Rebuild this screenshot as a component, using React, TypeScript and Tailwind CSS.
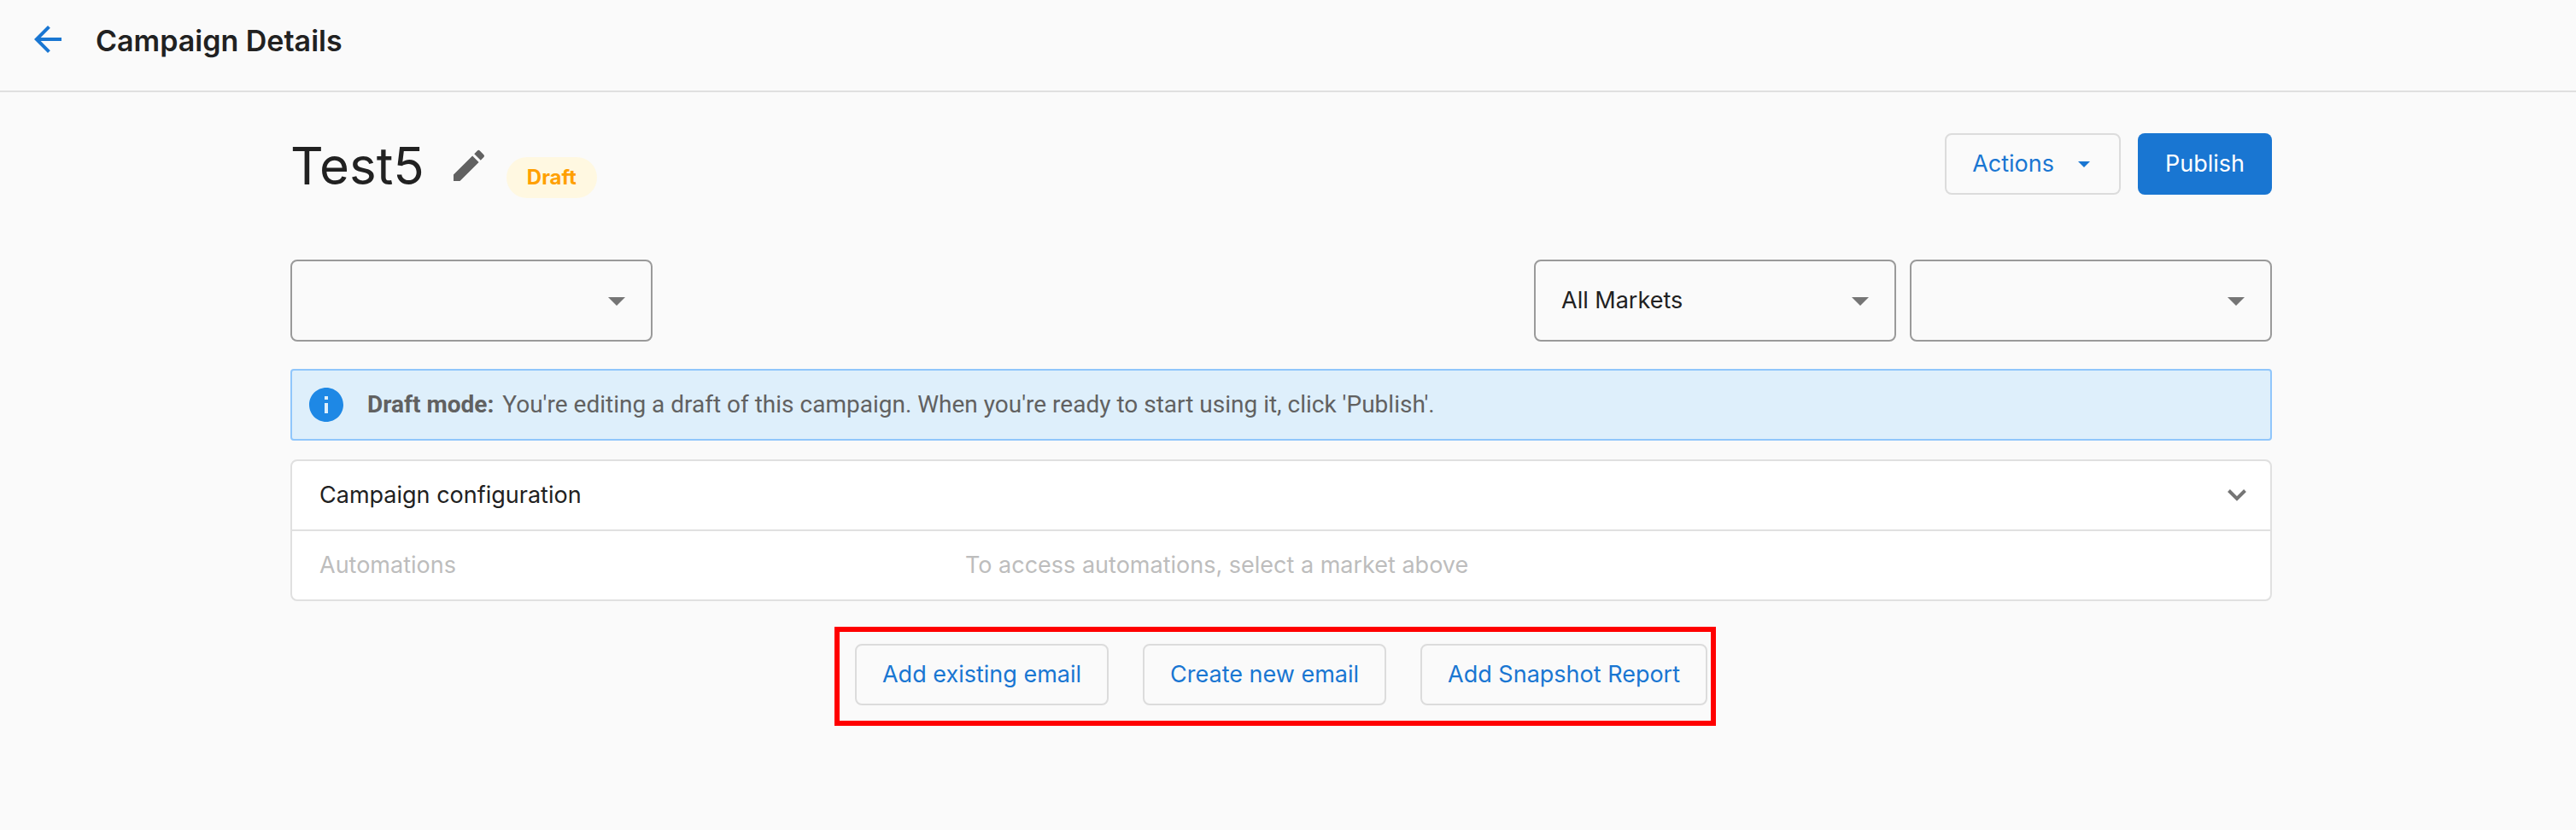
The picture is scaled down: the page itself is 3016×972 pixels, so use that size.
import React, { useState } from 'react';
import { MdArrowBack, MdEdit, MdInfo } from 'react-icons/md';

interface SelectFieldProps {
  label: string;
  options: string[];
}

function SelectField({ label, options }: SelectFieldProps) {
  const [value, setValue] = useState(options[0]);

  return (
    <div className="relative w-[424px]">
      <select
        aria-label={label}
        value={value}
        onChange={(e) => setValue(e.target.value)}
        className="block h-24 w-full appearance-none rounded-lg border-2 border-[#9a9a9a] bg-transparent pl-[30px] pr-16 text-[27px] text-[#212121]"
      >
        {options.map((option) => (
          <option key={option} value={option}>
            {option}
          </option>
        ))}
      </select>
      <svg viewBox="0 0 20 10" className="pointer-events-none absolute top-11 right-8 h-[10px] w-5 fill-[#757575]">
        <path d="M0 0h20L10 10z" />
      </svg>
    </div>
  );
}

const emailActions = ['Add existing email', 'Create new email', 'Add Snapshot Report'];

const outlineButton =
  'flex h-[72px] items-center rounded-lg border-2 border-[#dcdcdc] px-[30px] text-[27px] text-[#1976d2] hover:bg-blue-50';

export default function App() {
  const [expanded, setExpanded] = useState(false);

  return (
    <div className="min-h-screen bg-[#fafafa] font-['Inter',sans-serif] text-[#212121]">
      <header className="flex h-[108px] items-start gap-8 border-b-2 border-[#e0e0e0] px-8 pt-[22px]">
        <a href="#campaigns" aria-label="Back to campaigns" className="text-[#1976d2]">
          <MdArrowBack className="size-12" />
        </a>
        <div className="text-[34px] leading-[52px] font-semibold">Campaign Details</div>
      </header>

      <div className="pr-4">
        <main className="mx-auto max-w-[2320px] pt-12">
          <div className="flex items-start justify-between">
            <div className="flex h-[76px]">
              <h1 className="text-[60px] leading-[76px]">Test5</h1>
              <button type="button" aria-label="Edit name" className="ml-7 self-center text-[#616161]">
                <MdEdit className="size-12" />
              </button>
              <span className="ml-5 h-12 self-end rounded-full bg-[#fff8e1] px-6 text-[24px] leading-[48px] font-bold text-[#ffa000]">
                Draft
              </span>
            </div>
            <div className="flex gap-5">
              <button type="button" className={outlineButton}>
                Actions
                <svg viewBox="0 0 14 7" className="mr-1 ml-7 h-[7px] w-[14px] fill-current">
                  <path d="M0 0h14L7 7z" />
                </svg>
              </button>
              <button
                type="button"
                className="h-[72px] rounded-lg bg-[#1976d2] px-8 text-[27px] text-white hover:bg-blue-700"
              >
                Publish
              </button>
            </div>
          </div>

          <div className="mt-[72px] flex justify-between">
            <SelectField label="Campaign category" options={['']} />
            <div className="flex gap-4">
              <SelectField label="Market" options={['All Markets']} />
              <SelectField label="Language" options={['']} />
            </div>
          </div>

          <div className="mt-8 flex h-[84px] items-center rounded border-2 border-[#90c6fb] bg-[#deeffb] px-4 font-['Roboto',sans-serif] text-[28px] text-[#616161]">
            <MdInfo className="size-12 text-[#1e88e5]" />
            <p className="ml-6">
              <strong className="mr-2.5 font-bold">Draft mode:</strong>
              You're editing a draft of this campaign. When you're ready to start using it, click 'Publish'.
            </p>
          </div>

          <section className="mt-[22px] rounded-lg border-2 border-[#e0e0e0] bg-white text-[27px]">
            <button
              type="button"
              aria-expanded={expanded}
              onClick={() => setExpanded(!expanded)}
              className="flex h-20 w-full items-center justify-between pr-7 pl-8"
            >
              Campaign configuration
              <svg
                viewBox="0 0 22 14"
                className="h-[14px] w-[22px] fill-none stroke-[#757575] stroke-4"
              >
                <path d="M1.5 1.5l9.5 9.5l9.5 -9.5" />
              </svg>
            </button>
            <div className="grid h-[82px] grid-cols-3 items-center gap-4 border-t-2 border-[#e0e0e0] px-8 text-[#bdbdbd]">
              <span>Automations</span>
              <span className="col-span-2">To access automations, select a market above</span>
            </div>
          </section>

          <div className="mt-[50px] flex justify-center">
            <div className="relative flex gap-10">
              {emailActions.map((action) => (
                <button key={action} type="button" className={outlineButton}>
                  {action}
                </button>
              ))}
              <div className="pointer-events-none absolute -top-5 -right-2.5 -bottom-6 -left-6 border-6 border-[#ff0000]" />
            </div>
          </div>
        </main>
      </div>
    </div>
  );
}
